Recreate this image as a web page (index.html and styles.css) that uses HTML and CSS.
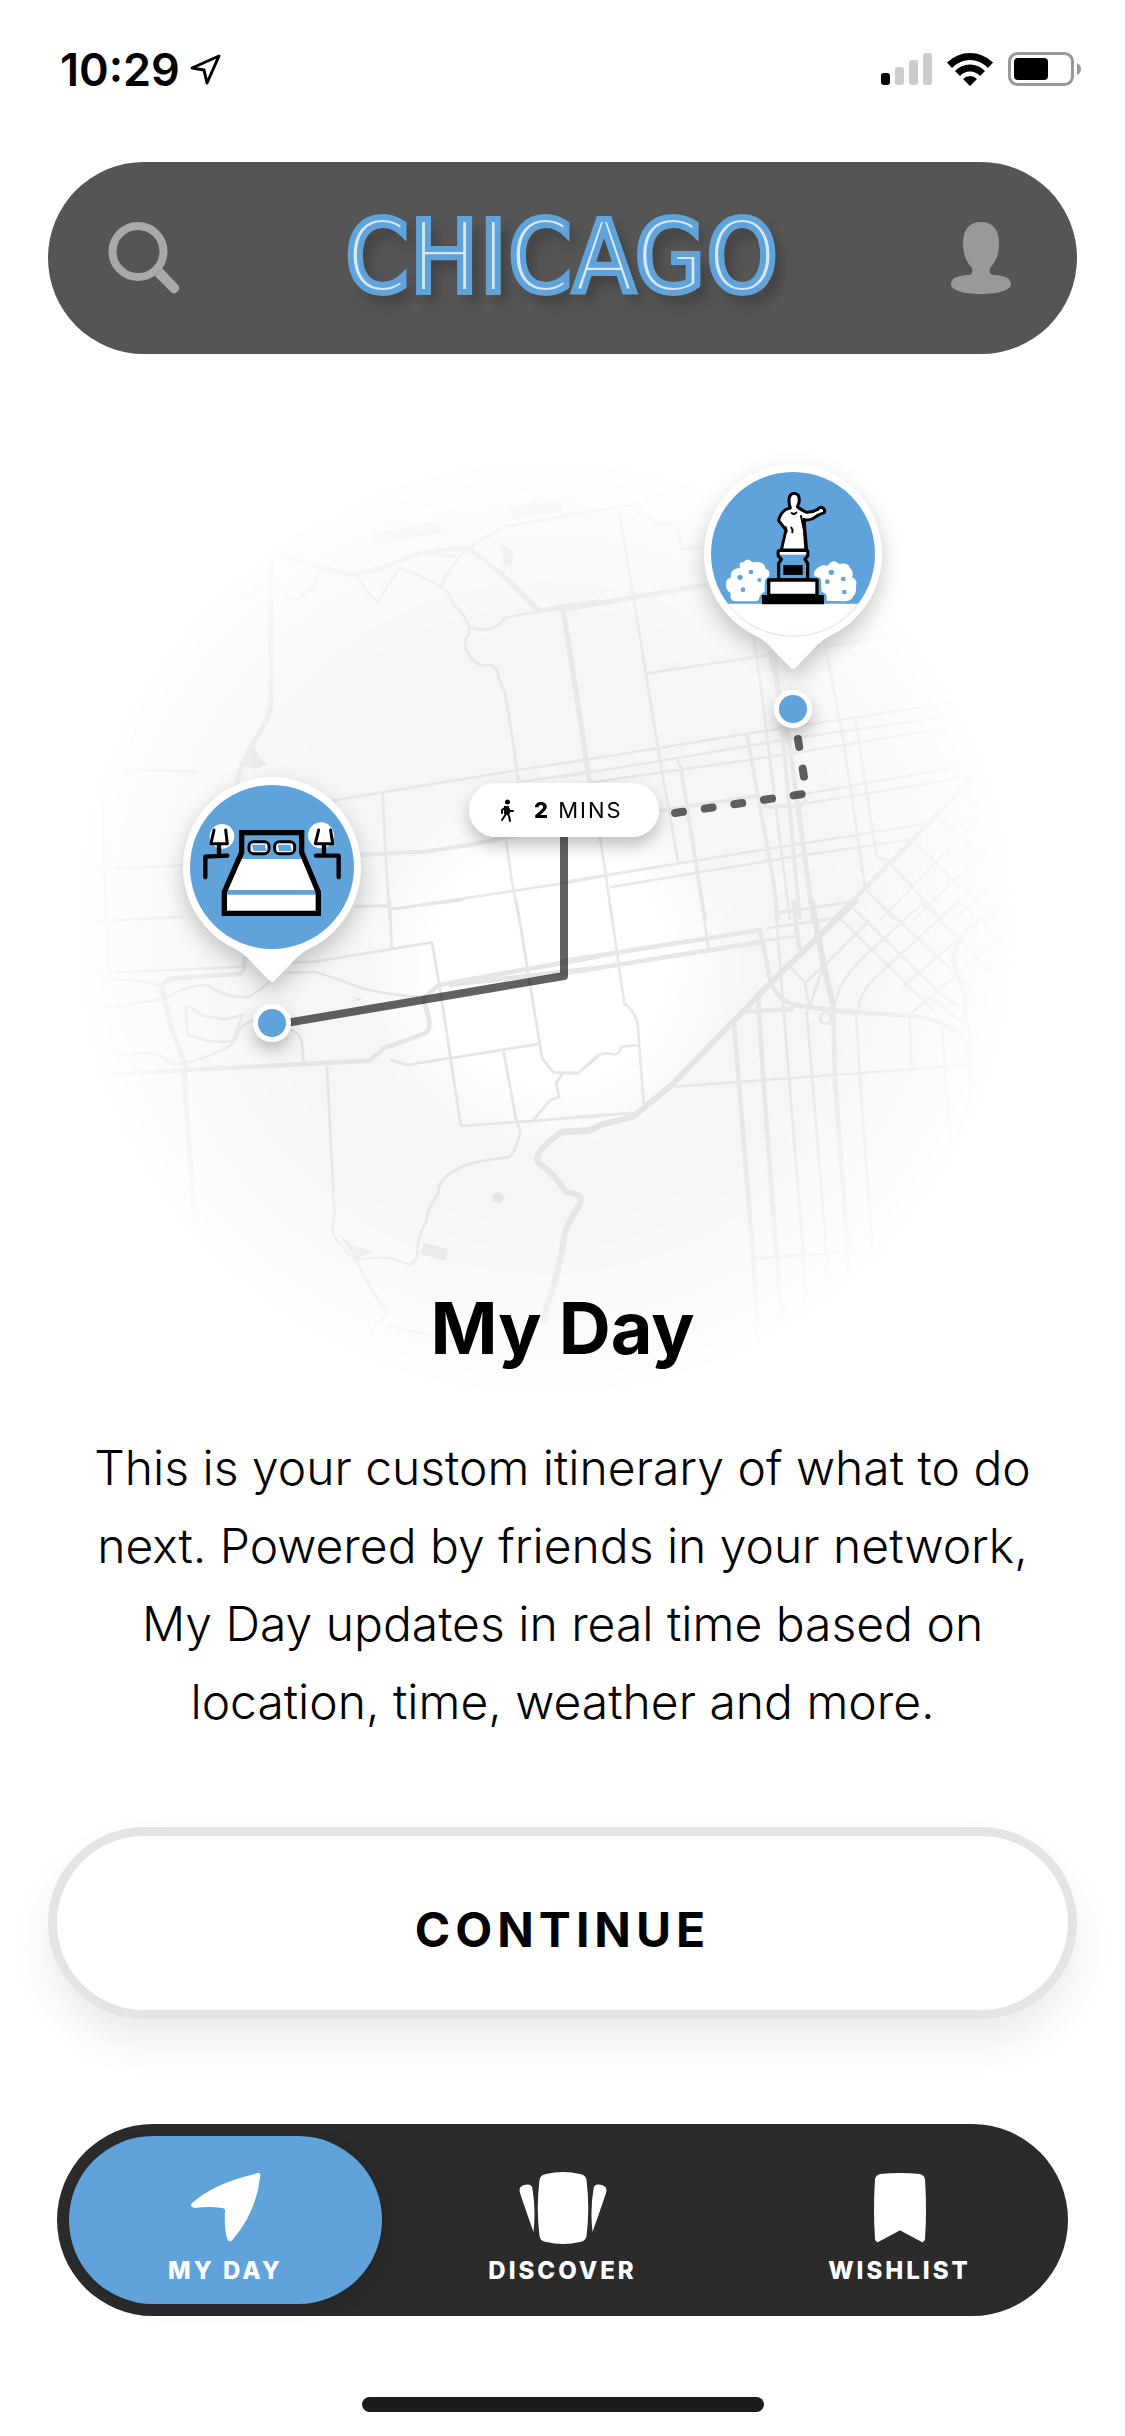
FILE: index.html
```html
<!DOCTYPE html>
<html lang="en">
<head>
<meta charset="utf-8">
<meta name="viewport" content="width=device-width, initial-scale=1">
<title>My Day</title>
<link rel="stylesheet" href="styles.css">
</head>
<body>
<div class="status">
  <div class="status-time">
    <span>10:29</span>
    <svg width="31" height="31" viewBox="0 0 31 31" aria-hidden="true"><path d="M29 2 2 14l12 2 3 13z" fill="none" stroke="#000" stroke-width="3" stroke-linejoin="round"/></svg>
  </div>
  <div class="status-icons">
    <svg width="51" height="33" viewBox="0 0 51 33" aria-hidden="true"><rect y="20" width="9" height="12" rx="3"/><g fill="#ccc"><rect x="14" y="14" width="9" height="18" rx="3"/><rect x="28" y="7" width="9" height="25" rx="3"/><rect x="42" width="9" height="32" rx="3"/></g></svg>
    <svg width="46" height="33" viewBox="0 0 46 33" aria-hidden="true"><path d="M0 9.500Q10 0 23 0t23 9.500L41 15Q33 7 23 7T5 15zM8 18q6-6.500 15-6.500T38 18l-5 5q-4-4.500-10-4.500T13 23zM16 26q3-3 7-3t7 3l-7 7z"/></svg>
    <svg width="74" height="35" viewBox="0 0 74 35" aria-hidden="true"><rect x="1.500" y="1.500" width="63" height="31" rx="8" fill="none" stroke="#999" stroke-width="3"/><rect x="6" y="6" width="34" height="22" rx="4"/><path d="M69 11q4 2 4 6t-4 6z" fill="#999"/></svg>
  </div>
</div>

<header class="topbar">
  <button class="icon-button" aria-label="Search">
    <svg width="72" height="72" viewBox="0 0 72 72"><circle cx="30" cy="29.500" r="25.500" fill="none" stroke="#a9a9a9" stroke-width="8"/><path d="M47 54l7-8 16 17q3 3-.500 6.500t-6.500.500z" fill="#a9a9a9"/></svg>
  </button>
  <div class="wordmark">CHICAGO</div>
  <button class="icon-button" aria-label="Profile">
    <svg width="72" height="72" viewBox="0 0 72 72"><path d="M36 0c12 0 18 8 18 21 0 12-3 18-9 25-1 5 0 7 5 7 12 1 16 4 16 9 0 6-12 10-30 10S6 68 6 62c0-5 4-8 16-9 5 0 6-2 5-7-6-7-9-13-9-25C18 8 24 0 36 0z" fill="#999"/></svg>
  </button>
</header>

<main>
  <svg class="map" viewBox="0 354 1125 1046" role="img" aria-label="Walking route from the hotel to the statue">
    <defs>
      <radialGradient id="fade" gradientUnits="userSpaceOnUse" cx="545" cy="928" r="475">
        <stop offset="0" stop-color="#fff"/><stop offset=".6" stop-color="#fff"/><stop offset=".85" stop-color="#777"/><stop offset="1" stop-color="#000"/>
      </radialGradient>
      <radialGradient id="glow" gradientUnits="userSpaceOnUse" cx="550" cy="965" r="195">
        <stop offset="0" stop-color="#fff"/><stop offset=".6" stop-color="#fff"/><stop offset="1" stop-color="#fff" stop-opacity="0"/>
      </radialGradient>
      <mask id="round"><rect y="354" width="1125" height="1046" fill="url(#fade)"/></mask>
      <filter id="drop" x="-40%" y="-30%" width="180%" height="180%"><feDropShadow dx="0" dy="10" stdDeviation="11" flood-opacity=".22"/></filter>
      <filter id="drop-near" x="-40%" y="-40%" width="180%" height="220%"><feDropShadow dx="0" dy="8" stdDeviation="8" flood-opacity=".25"/></filter>
      <path id="pin" d="M0-90A90 90 0 0 1 38 81Q30 85 25 90L3 113Q0 116-3 113L-25 90Q-30 85-38 81A90 90 0 0 1 0-90z"/>
    </defs>

    <g mask="url(#round)">
      <rect y="354" width="1125" height="1046" fill="#f6f6f6"/>
      <rect y="354" width="1125" height="1046" fill="url(#glow)"/>
      <!-- north-west -->
      <g transform="translate(60 420) scale(.3444 .3333)" fill="none" stroke="#e8e8e8" stroke-width="8" stroke-linejoin="round">
        <path stroke-width="15" d="M590 400Q700 420 770 445T870 460Q930 450 990 420T1190 385L1290 470 1390 572 1570 545M612 420V850Q612 890 560 970 515 1050 512 1110"/>
        <path d="M620 490Q650 500 655 520 680 560 710 520 740 510 745 480 755 450 765 450M860 465Q890 520 922 545L985 445Q1040 460 1105 500 1130 510 1140 550 1180 590 1188 622L1190 640Q1170 655 1180 690 1200 735 1235 737 1270 725 1275 780L1292 820Q1310 920 1332 1090M1190 622Q1240 640 1280 610 1290 595 1295 592L1390 575M1060 400 1150 410M1180 390Q1130 440 1108 500M1190 380 1290 320 1570 270"/>
        <path stroke-width="13" d="M1462 575 1500 820 1537 1090M870 1305 1060 1295 1190 1275 1330 1245"/>
        <path d="M790 1142 1330 1050 1570 1013M1330 1087 1570 1050M937 1118 945 1300 957 1500M857 1460 950 1458 962 1468 1450 1392 1570 1370M1295 1262 1310 1370 1335 1510M160 1048 400 1055M120 1040 135 1500M0 1355 380 1335M260 760Q240 880 205 980 180 1030 120 1040M500 540 620 490"/>
        <path fill="#e6e6e6" stroke="none" d="M565 970 575 1010 603 1030 570 1047 535 1040zM1285 370l30 25-5 45-25-15 5-20-15-15z"/>
        <path fill="#ececec" stroke="none" d="M912 338 1090 305 1120 335 912 374zM1310 260l150-25v40l-145 22z"/>
        <path stroke="#fafafa" stroke-width="30" d="M790 300 1080 275 1120 260 1290 250 1400 210 1570 180"/>
      </g>
      <!-- north-east -->
      <g transform="translate(560 420) scale(.3333)" fill="none" stroke="#e8e8e8" stroke-width="8" stroke-linejoin="round">
        <path stroke="#fafafa" stroke-width="18" d="M0 250 230 230 290 290 350 280V200"/>
        <path d="M0 285 210 258 300 317 350 310 365 390 430 380M175 265 220 530 300 1020 355 1330M262 760 630 705M580 650 600 780 690 1500M0 1032 600 935 1300 830M0 1072 350 1015 680 958 1300 870M90 1088 600 1015 700 1000 1300 900M352 1020 370 1060M790 650 850 960 915 1400M885 890 950 1312 980 1320 1130 1480M800 680 1060 635M20 1385 700 1275 1110 1210M150 1402 700 1310 1060 1258M120 1250 157 1500M655 1480 860 1448M700 1128 1230 1035M740 1150 1230 1070"/>
        <path stroke-width="15" d="M0 570 220 532 440 495M10 570 90 1090M630 690 690 980 760 1500"/>
        <path stroke-width="12" d="M300 1172 590 1128M560 940 640 1380 655 1500M362 1040 435 1500M590 1128 620 1160 720 1158 740 1140M645 700 720 1500"/>
        <path stroke-width="15" d="M820 1500 1000 1320 1240 1070"/>
        <path stroke-width="6" d="M1130 1190 1400 1430M1060 1260 1300 1500M990 1330 1150 1500M920 1410 1000 1500M960 1500 1290 1160M1060 1500 1350 1220M1180 1500 1390 1310M1200 1110 1400 1290"/>
      </g>
      <!-- south-west -->
      <g transform="translate(60 900) scale(.3444 .3333)" fill="none" stroke="#e5e5e5" stroke-width="8" stroke-linejoin="round">
        <path d="M857 20 945 17 962 27 1170 0M957 0 963 145M660 187 740 185 1080 127 1100 245 1164 678 1570 648M1325 0 1365 255 1400 475 1432 517 1505 520 1570 462M660 218 740 216Q790 230 850 255T1040 290M960 480 1008 495 1390 432M1288 455 1305 550 1325 665 1337 690Q1320 770 1300 772 1180 785 1150 810 1100 835 1098 880 1065 930 1062 970 1038 1010 1038 1050 1038 1095 1010 1093 960 1070 920 1073L860 1080Q800 1030 790 990L797 940 775 498M862 1085 900 1160 950 1240 890 1310M945 1275 1090 1310M1460 520 1440 550 1450 590 1425 600 1375 658M310 295Q360 255 425 255 500 300 550 290 580 270 610 245M330 492Q400 490 490 440 510 430 520 390 540 360 575 360M670 390Q700 400 703 430L707 485M0 225 540 200M0 70 360 50M130 0 145 225Q150 240 180 240 270 240 300 265M80 310Q150 330 200 315T310 300M100 460Q160 470 220 460T330 495"/>
        <path stroke-width="14" d="M535 170Q540 215 520 222L330 235Q295 240 297 270L325 390 360 480 365 600 395 1000M120 525 370 510 900 482 940 445 1060 400Q1078 390 1070 350L1055 295 1100 255 1570 168M1130 255 1570 203"/>
        <path stroke-width="18" d="M1570 675 1540 693 1458 697Q1370 755 1390 790 1435 820 1470 878 1530 880 1505 920 1460 990 1460 1040 1435 1170 1412 1220L1405 1270"/>
        <path d="M365 320 385 325 410 345 480 358 530 345 500 425 440 425 370 405z"/>
        <path fill="#e4e4e4" stroke="none" d="M1055 1028 1127 1047 1119 1082 1047 1063zM1253 893 1262 880 1272 877 1282 881 1292 893 1282 905 1272 909 1260 904zM805 1000 850 1038 912 1055 860 1078zM845 290 878 298 865 303z"/>
      </g>
      <!-- south-east -->
      <g transform="translate(560 900) scale(.3333)" fill="none" stroke="#e7e7e7" stroke-width="8" stroke-linejoin="round">
        <path d="M148 0 193 310Q230 340 233 375L252 620M425 0 445 145M645 0 670 320 730 1060 738 1240M650 38 880 5M610 122 710 108M620 85 820 55M0 520 55 518 110 468Q130 455 160 463 180 465 183 440L235 435M345 560 1330 488M0 655 230 638M740 330 800 1060 805 1200M888 340 900 540 940 1080M735 250 750 330M1048 345 1055 500M1145 370 1175 770M1225 370 1235 490M585 1075 1020 1045M665 1232 800 1225M690 200 735 248 800 190 850 140 930 60M750 315 790 200M825 310Q840 240 910 170L1100 0M895 330Q900 270 960 220L1200 0M840 55 1120 330M870 15 1150 290 1200 320M950 0 1240 270M1080 0 1290 215M1190 0 1370 160M1030 260 1330 0M1090 310 1370 70M1048 345 1110 290 1210 370"/>
        <path stroke-width="14" d="M0 185 600 90 632 245M0 222 610 125M522 370 580 1075 595 1340M595 295 610 540 665 1270M550 335 700 327M820 320 825 540 870 1140M700 0 718 150M632 245Q660 320 740 320L860 335 1010 345Q1150 350 1210 410 1250 520 1220 640 1180 700 1195 770M1400 0 1260 60Q1190 100 1180 180L1215 290V360"/>
        <path stroke-width="18" stroke="#e4e4e4" d="M0 695 90 690 120 675 220 650 335 555 640 240 890 0M755 0 790 190 820 320"/>
        <circle cx="797" cy="355" r="17"/>
      </g>
    </g>

    <g fill="none" stroke="#000" stroke-opacity=".62" stroke-linejoin="round">
      <path stroke-width="8" d="M280 1024 564 976V830"/>
      <path stroke-width="8" stroke-linecap="round" stroke-dasharray="8 22" d="M675 813 803 794"/>
      <path stroke-width="8" stroke-linecap="round" stroke-dasharray="8 22" d="M798 739 804 777"/>
    </g>

    <g filter="url(#drop-near)" fill="#fff">
      <circle cx="272" cy="1023" r="19"/><circle cx="793" cy="709" r="19"/>
      <rect x="469" y="783" width="190" height="54" rx="27"/>
    </g>
    <g filter="url(#drop)" fill="#fff"><use href="#pin" x="272" y="867"/><use href="#pin" x="793" y="554"/></g>
    <g fill="#5fa3da"><circle cx="272" cy="1023" r="14"/><circle cx="793" cy="709" r="14"/><circle cx="272" cy="867" r="82"/><circle cx="793" cy="554" r="82"/></g>

    <g transform="translate(499 799)"><circle cx="8.500" cy="3" r="2.500"/><path d="M7 8 3 11v3M7 9v6l-4 6M8 14l2 3 1 5M9 9l2 3h3" fill="none" stroke="#000" stroke-width="2" stroke-linecap="round" stroke-linejoin="round"/><path d="M5 7h5l1 8H5z"/></g>
    <text class="map-label" x="534" y="818"><tspan class="map-label-strong">2</tspan> MINS</text>

    <!-- bed with two lamps -->
    <g transform="translate(170 760) scale(.3333)" stroke-linejoin="round">
      <circle cx="156" cy="229" r="37" fill="#fff"/><circle cx="453" cy="226" r="39" fill="#fff"/>
      <path fill="#fff" d="M216 297H396L443 402V455H164V402z"/>
      <path fill="#5fa3da" d="M172 390H438v14H168z"/>
      <path fill="none" stroke="#000" stroke-width="16" stroke-linejoin="miter" d="M215 218H395V277L445 396V460H163V396L215 277z"/>
      <g fill="#fff" stroke="#000" stroke-width="9"><rect x="237" y="245" width="60" height="36" rx="14"/><rect x="314" y="245" width="60" height="36" rx="14"/></g>
      <path fill="#5fa3da" d="M246 254H286V262L290 273H250zM323 254H362V262L366 273H327z"/>
      <path fill="none" stroke="#000" stroke-width="9" stroke-linecap="round" d="M132 210 123 251H172L167 210M446 210 436 251H488L482 210"/>
      <path fill="none" stroke="#000" stroke-width="13" stroke-linecap="round" d="M147 255V285M462 255V285M172 287 106 290V352M438 287H506V352"/>
    </g>
    <!-- statue between two bushes -->
    <g transform="translate(690 450) scale(.3333)" stroke-linejoin="round">
      <path fill="#fff" d="M112 461H506A245 245 0 0 1 112 461z"/><path fill="none" stroke="#cfe3f4" stroke-width="3" d="M112 461A247 247 0 0 0 506 461"/>
      <path fill="#fff" d="M128 452Q119 445 122 430 105 420 108 400 108 385 122 384 120 355 150 353 145 335 160 337 172 320 187 337 200 335 215 338 226 345 226 355 245 365 236 380 225 385 224 400V425Q208 432 206 450 203 454 195 454H135zM410 452V438Q410 430 395 425L392 385 372 378Q368 362 388 350 400 343 412 348 430 323 447 342 475 335 481 355 492 365 486 382 505 390 498 410 499 430 492 436 485 453 465 454z"/>
      <g fill="#5fa3da"><circle cx="150" cy="382" r="8"/><circle cx="183" cy="366" r="7"/><circle cx="208" cy="390" r="6"/><circle cx="159" cy="419" r="7"/><circle cx="424" cy="367" r="8"/><circle cx="460" cy="387" r="7"/><circle cx="412" cy="395" r="7"/><circle cx="463" cy="426" r="7"/></g>
      <path fill="#fff" stroke="#000" stroke-width="9" d="M301 174Q296 160 297 148 300 130 313 130 328 131 328 150 328 160 322 170 330 178 350 187 365 188 383 178 385 173 396 172 407 177 403 188 383 195 378 200 360 214 342 208L350 300H274L288 240 266 212Q270 190 288 178z"/>
      <path fill="none" stroke="#000" stroke-width="6" stroke-linecap="round" d="M305 189Q313 195 319 188M333 198 342 240 346 298M304 233Q310 240 307 247M287 232 290 245"/>
      <path fill="#5fa3da" stroke="#000" stroke-width="10" d="M265 303H353V318L345 328 353 340V390H266V340L274 328 265 318z"/>
      <path stroke="#fff" stroke-width="8" d="M269 310H349"/>
      <rect x="280" y="345" width="58" height="30"/>
      <rect x="236" y="390" width="145" height="46" fill="#fff" stroke="#000" stroke-width="10"/>
      <path d="M216 435H402V463H216z"/>
    </g>
  </svg>

  <h1 class="title">My Day</h1>
  <p class="intro">This is your custom itinerary of what to do next. Powered by friends in your network, My Day updates in real time based on location, time, weather and more.</p>
  <button class="continue">CONTINUE</button>
</main>

<nav class="tabs">
  <a class="tab tab-active" href="#my-day">
    <svg width="70" height="72" viewBox="0 0 70 72" aria-hidden="true"><path d="M64 2Q71-1 69 6 65 40 43 66 38 73 36 66 33 56 34 39 34 36 31 36 18 34 4 36-2 35 1 31 24 11 64 2z" fill="#fff"/></svg>
    <span>MY DAY</span>
  </a>
  <a class="tab" href="#discover">
    <svg width="88" height="72" viewBox="0 0 88 72" aria-hidden="true"><path d="M27 2Q44-2 61 2 67 3 67.500 8 71 36 67.500 64 67 69 61 70 44 74 27 70 21 69 20.500 64 17 36 20.500 8 21 3 27 2zM5 13Q13 11 13.500 17 17 38 14.500 60 8 42 1 21-1 15 5 13zM83 13Q75 11 74.500 17 71 38 73.500 60 80 42 87 21 89 15 83 13z" fill="#fff"/></svg>
    <span>DISCOVER</span>
  </a>
  <a class="tab" href="#wishlist">
    <svg width="52" height="72" viewBox="0 0 52 72" aria-hidden="true"><path d="M6 2Q26 0 46 2 50 3 51 7 53 38 51 67 50 72 46 69L29 60Q26 57 23 60L6 69Q2 72 1 67-1 38 1 7 2 3 6 2z" fill="#fff"/></svg>
    <span>WISHLIST</span>
  </a>
</nav>
<div class="home-indicator"></div>
</body>
</html>
```
FILE: styles.css
```css
* {
  box-sizing: border-box;
}

body {
  margin: 0;
  background: #fff;
  color: #000;
  font-family: Inter, "Liberation Sans", sans-serif;
}

button {
  border: 0;
  background: none;
  color: inherit;
  font-family: inherit;
  cursor: pointer;
}

svg {
  display: block;
}

.status {
  display: flex;
  justify-content: space-between;
  align-items: flex-start;
  height: 162px;
  padding: 42px 43px 0 60px;
}

.status-time,
.status-icons {
  display: flex;
  align-items: center;
  height: 54px;
}

.status-time {
  gap: 10px;
  font-size: 45px;
  font-weight: 600;
}

.status-icons {
  gap: 15px;
}

.topbar {
  display: flex;
  justify-content: space-between;
  align-items: center;
  height: 192px;
  margin: 0 48px;
  padding: 0 60px;
  border-radius: 96px;
  background: #555;
}

.icon-button {
  padding: 0;
}

.wordmark {
  color: #d5e8f7;
  font-family: "Liberation Sans Narrow", "DejaVu Sans Condensed", "DejaVu Sans", sans-serif;
  font-size: 100px;
  letter-spacing: 2px;
  line-height: 120px;
  -webkit-text-stroke: 6px #5fa3da;
  text-shadow: 2px 2px 0 #eee, 8px 10px 12px rgba(0, 0, 0, .3);
}

.map {
  width: 100%;
  height: auto;
}

.map-label {
  font-size: 22px;
  letter-spacing: 2px;
}

.map-label-strong {
  font-weight: 800;
}

.title {
  position: relative;
  margin: -114px 0 0;
  font-size: 72px;
  font-weight: 700;
  line-height: 84px;
  text-align: center;
}

.intro {
  margin: 59px 0 0;
  padding: 0 82px;
  font-size: 48px;
  font-weight: 300;
  line-height: 78px;
  text-align: center;
}

.continue {
  display: block;
  width: calc(100% - 96px);
  height: 192px;
  margin: 86px 48px 0;
  padding: 12px 0 0;
  border: 9px solid #e4e4e4;
  border-radius: 96px;
  background: #fff;
  box-shadow: 0 24px 40px rgba(0, 0, 0, .08);
  font-size: 48px;
  font-weight: 700;
  letter-spacing: 5px;
}

.tabs {
  display: grid;
  grid-template-columns: repeat(3, 1fr);
  margin: 105px 57px 0;
  border-radius: 96px;
  background: #2b2b2b;
}

.tab {
  display: flex;
  flex-direction: column;
  align-items: center;
  gap: 12px;
  margin: 12px;
  padding: 36px 0 19px;
  border-radius: 84px;
  color: #fff;
  font-size: 24px;
  font-weight: 800;
  letter-spacing: 3px;
  line-height: 29px;
  text-decoration: none;
}

.tab-active {
  background: #5fa3da;
  box-shadow: 6px 6px 16px rgba(0, 0, 0, .1);
}

.home-indicator {
  width: 402px;
  height: 15px;
  margin: 81px auto 24px;
  border-radius: 8px;
  background: #1c1c1c;
}
```
